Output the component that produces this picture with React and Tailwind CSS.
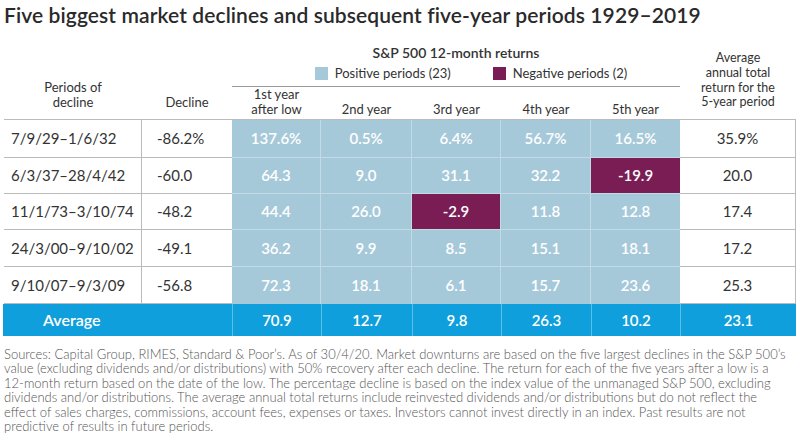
const rows = [
  { period: "7/9/29–1/6/32", decline: "-86.2%", vals: ["137.6%", "0.5%", "6.4%", "56.7%", "16.5%"], avg: "35.9%", h: "h-[38px]" },
  { period: "6/3/37–28/4/42", decline: "-60.0", vals: ["64.3", "9.0", "31.1", "32.2", "-19.9"], avg: "20.0", h: "h-[36px]" },
  { period: "11/1/73–3/10/74", decline: "-48.2", vals: ["44.4", "26.0", "-2.9", "11.8", "12.8"], avg: "17.4", h: "h-[36px]" },
  { period: "24/3/00–9/10/02", decline: "-49.1", vals: ["36.2", "9.9", "8.5", "15.1", "18.1"], avg: "17.2", h: "h-[37px]" },
  { period: "9/10/07–9/3/09", decline: "-56.8", vals: ["72.3", "18.1", "6.1", "15.7", "23.6"], avg: "25.3", h: "h-[37px]" },
];

const averages = ["70.9", "12.7", "9.8", "26.3", "10.2"];
const headers = [["1st year", "after low"], ["2nd year"], ["3rd year"], ["4th year"], ["5th year"]];
const widths = ["w-[89px]", "w-[91px]", "w-[89px]", "w-[90px]", "w-[89px]"];

export default function App() {
  return (
    <div className="w-[800px] h-[445px] bg-white text-[#333] overflow-hidden font-['Lato',sans-serif]">
      {/* Title */}
      <h1 className="pl-[4px] pt-[2px] text-[21px] leading-[26px] font-semibold text-[#2a2a2a] tracking-[0.1px]">
        Five biggest market declines and subsequent five-year periods 1929–2019
      </h1>

      {/* Header block */}
      <div className="flex pl-[4px] mt-[13px] h-[78px]">
        <div className="w-[138px] flex items-end justify-center pb-[9px] text-[13px] leading-[15px] text-center text-[#333]">
          Periods of<br />decline
        </div>
        <div className="w-[90px] flex items-end justify-center pb-[9px] text-[13px] leading-[15px] text-[#333]">
          Decline
        </div>
        <div className="w-[448px] flex flex-col">
          <div className="text-center text-[14px] leading-[18px] font-semibold text-[#333] mt-[3px]">
            S&amp;P 500 12-month returns
          </div>
          <div className="flex items-center justify-center gap-[42px] text-[13px] leading-[16px] text-[#333] mt-[3px] pl-[30px]">
            <span className="flex items-center gap-[7px]">
              <span className="w-[13px] h-[13px] bg-[#a6c9da]" />
              Positive periods (23)
            </span>
            <span className="flex items-center gap-[7px]">
              <span className="w-[13px] h-[13px] bg-[#7b1d55]" />
              Negative periods (2)
            </span>
          </div>
          <div className="border-t border-[#999] mt-[5px]" />
          <div className="flex flex-1">
            {headers.map((h, i) => (
              <div key={i} className={`${widths[i]} flex items-end justify-center pb-[9px] text-[13px] leading-[15px] text-center`}>
                <span>
                  {h.map((l, j) => (
                    <span key={j} className="block">{l}</span>
                  ))}
                </span>
              </div>
            ))}
          </div>
        </div>
        <div className="w-[116px] flex items-end justify-center pb-[9px] text-[12.5px] leading-[14.7px] text-center">
          Average<br />annual total<br />return for the<br />5-year period
        </div>
      </div>

      {/* Body */}
      <div className="ml-[4px] w-[792px] border-t border-[#bbb]">
        {rows.map((r, i) => (
          <div key={i} className={`flex ${r.h} text-[15px]`}>
            <div className="w-[138px] flex items-center pl-[7px] border-b border-[#bbb] border-r">
              {r.period}
            </div>
            <div className="w-[90px] flex items-center pl-[15px] border-b border-[#bbb]">
              {r.decline}
            </div>
            {r.vals.map((v, j) => {
              const neg = v.startsWith("-");
              return (
                <div
                  key={j}
                  className={`${widths[j]} flex items-center justify-center font-semibold text-white ${
                    neg ? "bg-[#7b1d55]" : "bg-[#a6c9da]"
                  } ${j < 4 ? "border-r border-[#c3dbe6]" : ""} ${i < 4 ? "border-b border-[#c3dbe6]" : ""}`}
                >
                  {v}
                </div>
              );
            })}
            <div className="w-[116px] flex items-center justify-center border-b border-r border-[#bbb]">
              {r.avg}
            </div>
          </div>
        ))}

        {/* Average row */}
        <div className="flex h-[32px] bg-[#0f9fdc] text-white font-semibold text-[15px] -ml-[1px] w-[793px]">
          <div className="w-[229px] flex items-center pl-[40px] text-[16px]">Average</div>
          {averages.map((v, j) => (
            <div key={j} className={`${widths[j]} flex items-center justify-center border-l border-[#5cc0ea]`}>
              {v}
            </div>
          ))}
          <div className="w-[116px] flex items-center justify-center border-l border-[#5cc0ea]">23.1</div>
        </div>
      </div>

      {/* Footnote */}
      <p className="pl-[4px] pr-[2px] mt-[11px] text-[13px] leading-[14.4px] text-[#555] font-light whitespace-nowrap">
        Sources: Capital Group, RIMES, Standard &amp; Poor’s. As of 30/4/20. Market downturns are based on the five largest declines in the S&amp;P 500’s<br />
        value (excluding dividends and/or distributions) with 50% recovery after each decline. The return for each of the five years after a low is a<br />
        12-month return based on the date of the low. The percentage decline is based on the index value of the unmanaged S&amp;P 500, excluding<br />
        dividends and/or distributions. The average annual total returns include reinvested dividends and/or distributions but do not reflect the<br />
        effect of sales charges, commissions, account fees, expenses or taxes. Investors cannot invest directly in an index. Past results are not<br />
        predictive of results in future periods.
      </p>
    </div>
  );
}
